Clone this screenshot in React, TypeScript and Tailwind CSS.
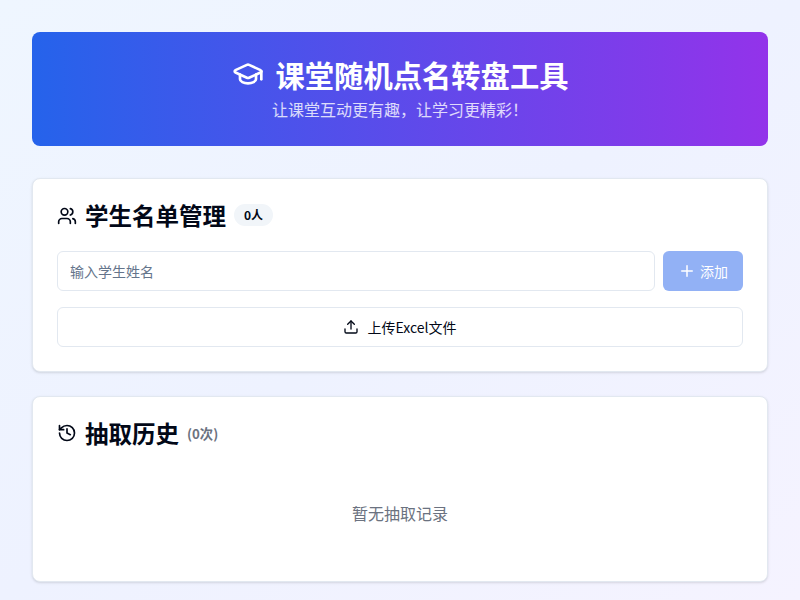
import { GraduationCap, History, Plus, Upload, Users } from 'lucide-react';

export default function App() {
    return (
        <div className="min-h-screen bg-linear-to-br/srgb from-[#eff6ff] via-[#eef2ff] to-[#f5f3ff] px-8 pt-8 font-['Noto_Sans_CJK_SC',sans-serif] text-[#020817]">
            <header className="mb-8 flex h-[114px] flex-col items-center justify-center rounded-lg bg-linear-to-r/srgb from-[#2563eb] to-[#9333ea] pb-px text-white">
                <div className="flex items-center gap-3">
                    <GraduationCap className="h-8 w-8" />
                    <h1 className="text-[29.3px] leading-9 font-bold">课堂随机点名转盘工具</h1>
                </div>
                <p className="mt-[5px] text-base leading-6 text-white/80">让课堂互动更有趣，让学习更精彩！</p>
            </header>

            <section className="mb-6 rounded-lg border border-[#e2e8f0] bg-white p-6 shadow-sm">
                <div className="mb-5 flex h-7 items-center gap-2">
                    <Users className="mb-0.5 h-5 w-5" />
                    <h2 className="mb-1 text-[23.5px] leading-7 font-semibold">学生名单管理</h2>
                    <span className="mb-1 rounded-full bg-[#f1f5f9] px-2.5 py-[3px] text-xs leading-4 font-semibold">0人</span>
                </div>
                <div className="mb-4 flex gap-2">
                    <input
                        placeholder="输入学生姓名"
                        className="h-10 flex-1 rounded-md border border-[#e2e8f0] bg-white px-3 text-sm placeholder:text-[#64748b]"
                    />
                    <button className="flex h-10 w-20 items-center justify-center gap-1 rounded-md bg-[#2563eb]/50 text-sm text-white">
                        <Plus className="h-[18px] w-[18px]" />
                        添加
                    </button>
                </div>
                <button className="flex h-10 w-full items-center justify-center gap-2 rounded-md border border-[#e2e8f0] bg-white text-sm">
                    <Upload className="h-4 w-4" />
                    上传Excel文件
                </button>
            </section>

            <section className="rounded-lg border border-[#e2e8f0] bg-white p-6 shadow-sm">
                <div className="mb-5 flex h-7 items-center gap-2">
                    <History className="mb-1 h-5 w-5" />
                    <h2 className="mb-1 text-[23.5px] leading-7 font-semibold">抽取历史</h2>
                    <span className="mb-0.5 text-[13.3px] font-semibold text-[#6b7280]">(0次)</span>
                </div>
                <p className="pt-8 pb-8 text-center text-base leading-6 text-[#6b7280]">暂无抽取记录</p>
            </section>
        </div>
    );
}
